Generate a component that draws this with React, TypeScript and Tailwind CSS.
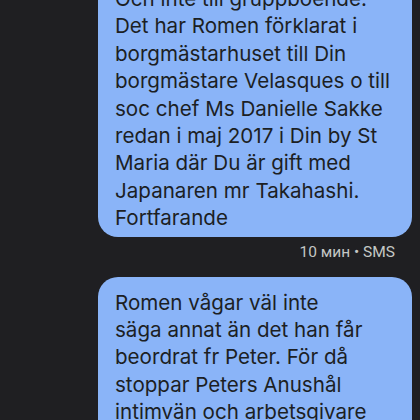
const first = [
  "Och inte till gruppboende.",
  "Det har Romen förklarat i",
  "borgmästarhuset till Din",
  "borgmästare Velasques o till",
  "soc chef Ms Danielle Sakke",
  "redan i maj 2017 i Din by St",
  "Maria där Du är gift med",
  "Japanaren mr Takahashi.",
  "Fortfarande",
];

const second = [
  "Romen vågar väl inte",
  "säga annat än det han får",
  "beordrat fr Peter. För då",
  "stoppar Peters Anushål",
  "intimvän och arbetsgivare",
  "Romen",
];

const Bubble = ({ lines, className }: { lines: string[]; className: string }) => (
  <div
    className={`w-[314px] bg-[#8ab4f8] text-[#1c1f24] rounded-[20px] pl-[17px] pr-[12px] text-[20.6px] leading-[27.4px] ${className}`}
  >
    {lines.map((l, i) => (
      <div key={i} className="whitespace-nowrap">
        {l}
      </div>
    ))}
  </div>
);

const App = () => {
  return (
    <div
      className="w-[420px] h-[420px] overflow-hidden bg-[#1f1f22] flex flex-col items-end pr-[8px]"
      style={{ fontFamily: "Inter, Roboto, 'Noto Sans', sans-serif" }}
    >
      <Bubble lines={first} className="mt-[-27px] pt-[12px] pb-[5px] shrink-0" />
      <div
        className="mt-[5px] mr-[17px] text-[15.5px] leading-[20px] text-[#c4c7c5]"
        style={{ fontFamily: "Roboto, sans-serif" }}
      >
        10 мин • SMS
      </div>
      <Bubble lines={second} className="mt-[15px] pt-[12px] pb-[10px] shrink-0" />
    </div>
  );
};

export default App;
